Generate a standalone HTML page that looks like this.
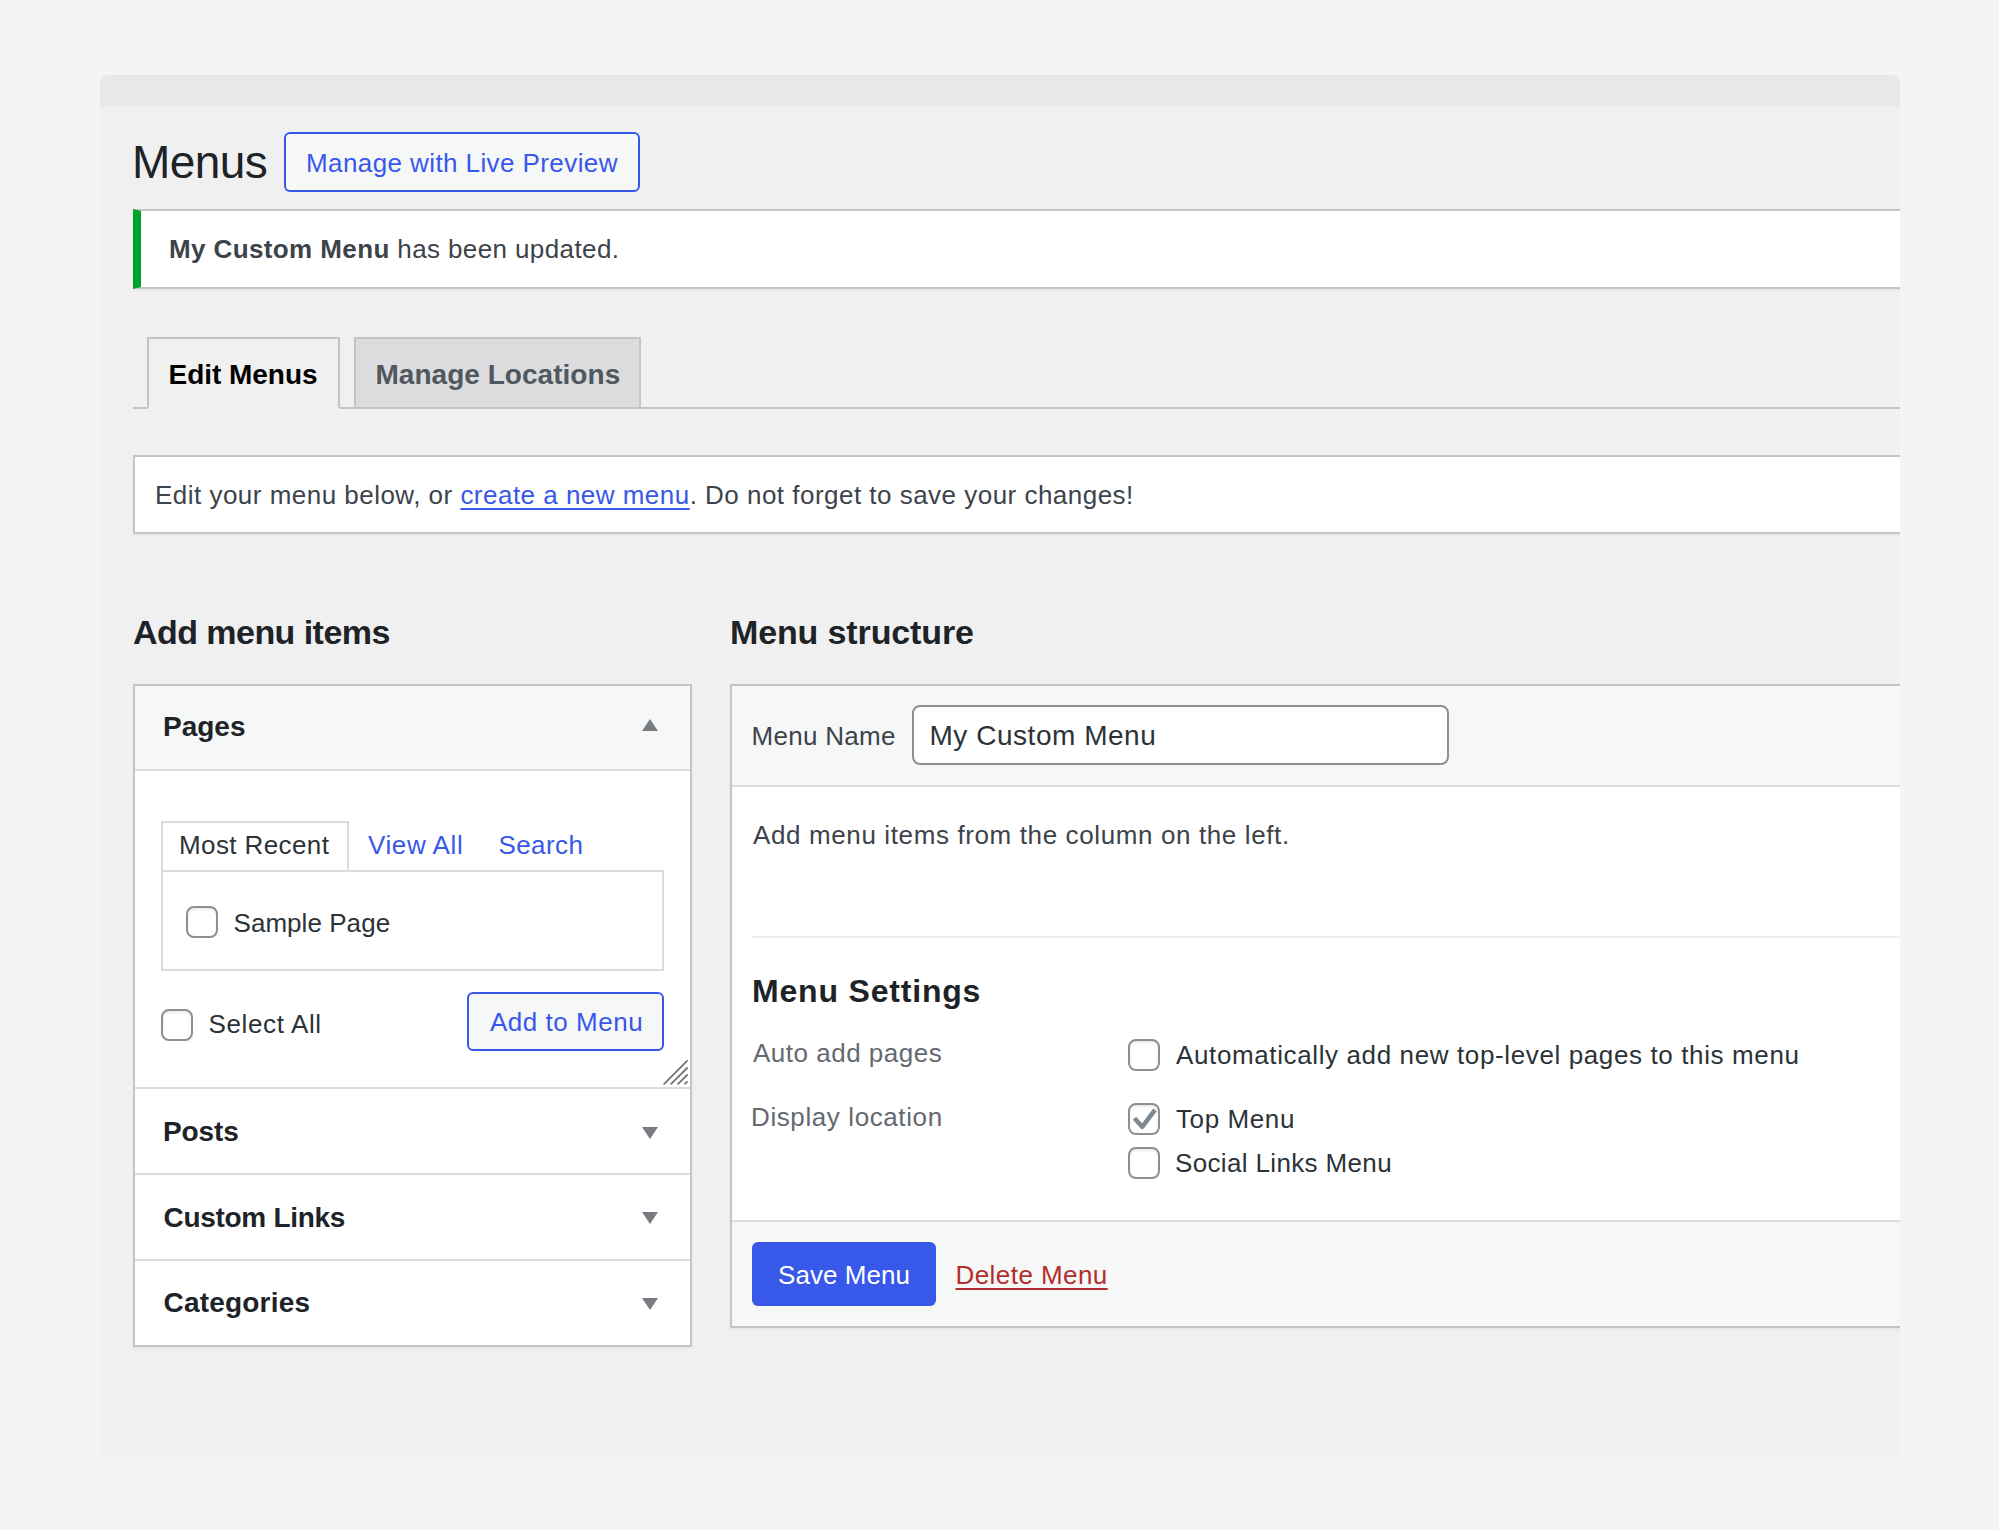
<!DOCTYPE html>
<html>
<head>
<meta charset="utf-8">
<style>
html,body{margin:0;padding:0}
body{width:1999px;height:1530px;background:#f3f4f6;position:relative;overflow:hidden;font-family:"Liberation Sans",sans-serif}
.card{position:absolute;left:100px;top:75px;width:1800px;height:1380px;background:#f0f0f1;border-radius:8px;overflow:hidden}
.in{position:absolute;left:-100px;top:-75px;width:1999px;height:1530px}
.topbar{position:absolute;left:100px;top:75px;width:1800px;height:31px;background:#e8e8e8}
.t{position:absolute;line-height:1;white-space:nowrap;font-family:"Liberation Sans",sans-serif}
.b{font-weight:700}
.box{position:absolute;box-sizing:border-box}
.cb{position:absolute;box-sizing:border-box;width:32px;height:32px;border:2px solid #8c8f94;border-radius:8px;background:#fff;box-shadow:inset 0 2px 2px rgba(0,0,0,.08)}
.tri{position:absolute;width:0;height:0;border-left:8px solid transparent;border-right:8px solid transparent}
.up{border-bottom:12px solid #787c82}
.down{border-top:12px solid #787c82}
</style>
</head>
<body>
<div class="card"><div class="in">
  <div class="topbar"></div>

  <!-- Heading -->
  <div class="t" style="left:132px;top:139px;font-size:46px;color:#1d2327;letter-spacing:-0.6px">Menus</div>
  <div class="box" style="left:284px;top:132px;width:356px;height:60px;border:2px solid #3858e9;border-radius:6px;background:#f6f7f7"></div>
  <div class="t" style="left:306px;top:149.5px;font-size:26px;color:#3858e9;letter-spacing:0.41px">Manage with Live Preview</div>

  <!-- Notice -->
  <div class="box" style="left:133px;top:209px;width:1800px;height:80px;background:#fff;border:2px solid #c3c4c7;border-left:8px solid #00a32a;box-shadow:0 2px 2px rgba(0,0,0,.04)"></div>
  <div class="t" style="left:169px;top:236px;font-size:26px;color:#3c434a;letter-spacing:0.39px"><span class="b">My Custom Menu</span> has been updated.</div>

  <!-- Nav tabs -->
  <div class="box" style="left:133px;top:407px;width:1800px;height:2px;background:#c3c4c7"></div>
  <div class="box" style="left:147px;top:337px;width:193px;height:72px;border:2px solid #c3c4c7;border-bottom:2px solid #f0f0f1;background:#f0f0f1"></div>
  <div class="t b" style="left:168.5px;top:361px;font-size:28px;color:#000;letter-spacing:-0.03px">Edit Menus</div>
  <div class="box" style="left:354px;top:337px;width:287px;height:72px;border:2px solid #c3c4c7;background:#dcdcde"></div>
  <div class="t b" style="left:375.5px;top:360.5px;font-size:28px;color:#50575e;letter-spacing:0.03px">Manage Locations</div>

  <!-- Manage menus -->
  <div class="box" style="left:133px;top:455px;width:1800px;height:79px;background:#fff;border:2px solid #c3c4c7;box-shadow:0 2px 2px rgba(0,0,0,.04)"></div>
  <div class="t" style="left:155px;top:482px;font-size:26px;color:#3c434a;letter-spacing:0.48px">Edit your menu below, or <span style="color:#3858e9;text-decoration:underline;text-decoration-thickness:2px;text-underline-offset:4px">create a new menu</span>. Do not forget to save your changes!</div>

  <!-- Column headings -->
  <div class="t b" style="left:133px;top:615px;font-size:34px;color:#1d2327;letter-spacing:-0.55px">Add menu items</div>
  <div class="t b" style="left:730px;top:615px;font-size:34px;color:#1d2327;letter-spacing:-0.13px">Menu structure</div>

  <!-- Left accordion -->
  <div class="box" style="left:133px;top:684px;width:559px;height:663px;background:#fff;border:2px solid #c3c4c7;box-shadow:0 2px 2px rgba(0,0,0,.04)"></div>
  <div class="box" style="left:135px;top:686px;width:555px;height:85px;background:#f6f7f7;border-bottom:2px solid #dcdcde"></div>
  <div class="t b" style="left:163px;top:713px;font-size:28px;color:#1d2327;letter-spacing:0px">Pages</div>
  <div class="tri up" style="left:642px;top:719px"></div>

  <div class="box" style="left:161px;top:870px;width:503px;height:101px;background:#fff;border:2px solid #dcdcde"></div>
  <div class="box" style="left:161px;top:821px;width:188px;height:49px;background:#fff;border:2px solid #dcdcde;border-bottom:none"></div>
  <div class="t" style="left:179px;top:832px;font-size:26px;color:#2c3338;letter-spacing:0.4px">Most Recent</div>
  <div class="t" style="left:368px;top:832px;font-size:26px;color:#3858e9;letter-spacing:0.59px">View All</div>
  <div class="t" style="left:498.5px;top:832px;font-size:26px;color:#3858e9;letter-spacing:0.4px">Search</div>

  <div class="cb" style="left:186px;top:906px"></div>
  <div class="t" style="left:233.5px;top:909.5px;font-size:26px;color:#2c3338;letter-spacing:0.05px">Sample Page</div>

  <div class="cb" style="left:161px;top:1009px"></div>
  <div class="t" style="left:208.5px;top:1011px;font-size:26px;color:#2c3338;letter-spacing:0.63px">Select All</div>
  <div class="box" style="left:467px;top:992px;width:197px;height:59px;border:2px solid #3858e9;border-radius:6px;background:#f6f7f7"></div>
  <div class="t" style="left:490px;top:1009px;font-size:26px;color:#3858e9;letter-spacing:0.53px">Add to Menu</div>

  <svg style="position:absolute;left:660px;top:1056px" width="32" height="32" viewBox="660 1056 32 32">
    <g stroke="#757575" stroke-width="1.8" stroke-linecap="round">
      <line x1="664.2" y1="1083.8" x2="687.1" y2="1060.9"/>
      <line x1="671.2" y1="1083.8" x2="687.1" y2="1068"/>
      <line x1="678.1" y1="1083.8" x2="687.1" y2="1075"/>
      <line x1="685.1" y1="1083.8" x2="687.1" y2="1081.9"/>
    </g>
  </svg>

  <div class="box" style="left:135px;top:1087px;width:555px;height:2px;background:#dcdcde"></div>
  <div class="t b" style="left:163px;top:1117.5px;font-size:28px;color:#1d2327;letter-spacing:-0.13px">Posts</div>
  <div class="tri down" style="left:642px;top:1127px"></div>
  <div class="box" style="left:135px;top:1173px;width:555px;height:2px;background:#dcdcde"></div>
  <div class="t b" style="left:163.5px;top:1203.5px;font-size:28px;color:#1d2327;letter-spacing:-0.3px">Custom Links</div>
  <div class="tri down" style="left:642px;top:1212px"></div>
  <div class="box" style="left:135px;top:1259px;width:555px;height:2px;background:#dcdcde"></div>
  <div class="t b" style="left:163.5px;top:1289px;font-size:28px;color:#1d2327;letter-spacing:0.2px">Categories</div>
  <div class="tri down" style="left:642px;top:1298px"></div>

  <!-- Right panel -->
  <div class="box" style="left:730px;top:684px;width:1200px;height:644px;background:#fff;border:2px solid #c3c4c7;box-shadow:0 2px 2px rgba(0,0,0,.04)"></div>
  <div class="box" style="left:732px;top:686px;width:1200px;height:101px;background:#f6f7f7;border-bottom:2px solid #dcdcde"></div>
  <div class="t" style="left:751.5px;top:723px;font-size:26px;color:#3c434a;letter-spacing:0.3px">Menu Name</div>
  <div class="box" style="left:912px;top:705px;width:537px;height:60px;background:#fff;border:2px solid #8c8f94;border-radius:8px"></div>
  <div class="t" style="left:929.5px;top:722px;font-size:28px;color:#2c3338;letter-spacing:0.53px">My Custom Menu</div>

  <div class="t" style="left:753px;top:822px;font-size:26px;color:#3c434a;letter-spacing:0.62px">Add menu items from the column on the left.</div>
  <div class="box" style="left:752px;top:936px;width:1200px;height:2px;background:#f0f0f1"></div>

  <div class="t b" style="left:752px;top:975px;font-size:32px;color:#1d2327;letter-spacing:0.81px">Menu Settings</div>
  <div class="t" style="left:753px;top:1039.5px;font-size:26px;color:#646970;letter-spacing:0.5px">Auto add pages</div>
  <div class="t" style="left:751px;top:1104px;font-size:26px;color:#646970;letter-spacing:0.6px">Display location</div>

  <div class="cb" style="left:1128px;top:1039px"></div>
  <div class="t" style="left:1176px;top:1042px;font-size:26px;color:#2c3338;letter-spacing:0.62px">Automatically add new top-level pages to this menu</div>
  <div class="cb" style="left:1128px;top:1103px"></div>
  <svg style="position:absolute;left:1128px;top:1103px" width="32" height="32" viewBox="0 0 32 32">
    <path d="M6.5 15.2 L14.2 23.8 L27 6.8" fill="none" stroke="#7e8993" stroke-width="4.6" stroke-linejoin="round"/>
  </svg>
  <div class="t" style="left:1176px;top:1106px;font-size:26px;color:#2c3338;letter-spacing:0.6px">Top Menu</div>
  <div class="cb" style="left:1128px;top:1147px"></div>
  <div class="t" style="left:1175px;top:1150px;font-size:26px;color:#2c3338;letter-spacing:0.35px">Social Links Menu</div>

  <div class="box" style="left:732px;top:1220px;width:1200px;height:106px;background:#f6f7f7;border-top:2px solid #dcdcde"></div>
  <div class="box" style="left:752px;top:1242px;width:184px;height:64px;background:#3858e9;border-radius:6px"></div>
  <div class="t" style="left:778px;top:1262px;font-size:26px;color:#fff;letter-spacing:0.07px">Save Menu</div>
  <div class="t" style="left:955.5px;top:1262px;font-size:26px;color:#b32d2e;letter-spacing:0.44px;text-decoration:underline;text-decoration-thickness:2px;text-underline-offset:4px">Delete Menu</div>
</div></div>
</body>
</html>
